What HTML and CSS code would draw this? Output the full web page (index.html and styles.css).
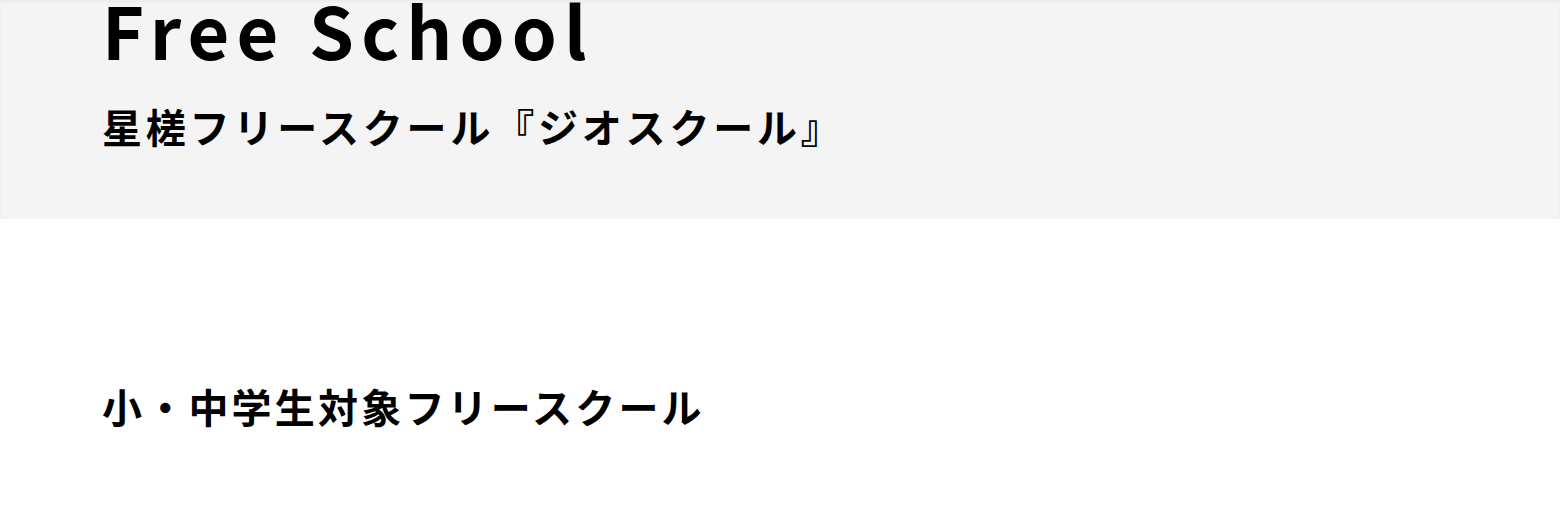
FILE: index.html
```html
<!DOCTYPE html>
<html lang="ja">
<head>
    <meta charset="UTF-8">
    <meta name="viewport" content="width=device-width, initial-scale=1.0">
    <title>Free School</title>
    <link rel="stylesheet" href="styles.css">
</head>
<body>
    <header class="page-head">
        <h1 class="page-title">Free School</h1>
        <p class="page-sub">星槎フリースクール『ジオスクール』</p>
    </header>

    <section class="intro">
        <h2 class="intro-title">小・中学生対象フリースクール</h2>
    </section>
</body>
</html>
```

FILE: styles.css
```css
/* General Styling */
body {
    font-family: "Noto Sans CJK JP", "Noto Sans", sans-serif;
    margin: 0;
    padding: 0;
    background: #fff;
    color: #000;
}

/* Grey title band */
.page-head {
    background: #f4f4f4;
    padding: 0 102px 63px;
    box-shadow: inset 0 2px 3px rgba(0, 0, 0, 0.04);
}

.page-title {
    margin: 0;
    font-size: 72px;
    font-weight: 700;
    line-height: 0.8;
    letter-spacing: 0.1em;
}

.page-sub {
    margin: 38px 0 0;
    font-size: 40px;
    font-weight: 700;
    line-height: 1.5;
    letter-spacing: 0.095em;
}

/* Body section */
.intro {
    padding: 157px 102px 0;
}

.intro-title {
    margin: 0;
    font-size: 40px;
    font-weight: 700;
    line-height: 1.5;
    letter-spacing: 0.08em;
}
```
